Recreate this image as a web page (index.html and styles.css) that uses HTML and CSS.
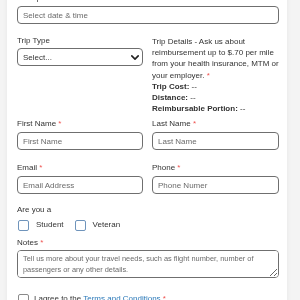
FILE: index.html
```html
<!DOCTYPE html>
<html lang="en">
<head>
  <meta charset="UTF-8">
  <meta name="viewport" content="width=device-width, initial-scale=1">
  <title>Book a Ride</title>
  <link rel="stylesheet" href="styles.css">
</head>
<body>

  <div class="form-card">
    <form id="rideForm" class="ride-form">

      <div class="field">
        <label for="pickup">Pickup Date &amp; Time</label>
        <input type="text" id="pickup" name="pickup" placeholder="Select date &amp; time">
      </div>

      <div class="row trip-row">
        <div class="field">
          <label for="tripType">Trip Type</label>
          <div class="select-wrap">
            <select id="tripType" name="tripType">
              <option>Select...</option>
              <option>One Way</option>
              <option>Round Trip</option>
            </select>
            <svg class="chevron" viewBox="0 0 10 6" width="8" height="5">
              <path d="M1 1l4 4 4-4" fill="none" stroke="#222" stroke-width="2" stroke-linecap="round" stroke-linejoin="round"/>
            </svg>
          </div>
        </div>
        <div class="trip-details">
          <p>Trip Details - Ask us about reimbursement up to $.70 per mile from your health insurance, MTM or your employer. <span class="req">*</span></p>
          <p><strong>Trip Cost:</strong> --</p>
          <p><strong>Distance:</strong> --</p>
          <p><strong>Reimbursable Portion:</strong> --</p>
        </div>
      </div>

      <div class="row name-row">
        <div class="field">
          <label for="firstName">First Name <span class="req">*</span></label>
          <input type="text" id="firstName" name="firstName" placeholder="First Name">
        </div>
        <div class="field">
          <label for="lastName">Last Name <span class="req">*</span></label>
          <input type="text" id="lastName" name="lastName" placeholder="Last Name">
        </div>
      </div>

      <div class="row contact-row">
        <div class="field">
          <label for="email">Email <span class="req">*</span></label>
          <input type="email" id="email" name="email" placeholder="Email Address">
        </div>
        <div class="field">
          <label for="phone">Phone <span class="req">*</span></label>
          <input type="tel" id="phone" name="phone" placeholder="Phone Numer">
        </div>
      </div>

      <div class="status-field">
        <span class="label">Are you a</span>
        <div class="checks">
          <label class="check"><span class="box"></span>Student</label>
          <label class="check"><span class="box"></span>Veteran</label>
        </div>
      </div>

      <div class="notes-field">
        <label for="notes">Notes <span class="req">*</span></label>
        <textarea id="notes" name="notes" placeholder="Tell us more about your travel needs, such as flight number, number of passengers or any other details."></textarea>
      </div>

      <div class="terms">
        <span class="box"></span>
        <span>I agree to the <a href="#">Terms and Conditions</a> <span class="req">*</span></span>
      </div>

    </form>
  </div>

</body>
</html>
```

FILE: styles.css
```css
body {
  margin: 0;
  background: #f4f4f4;
  font-family: "Liberation Sans", Arial, sans-serif;
  font-size: 8px;
  color: #333;
  overflow: hidden;
}

.form-card {
  width: 262px;
  margin: -7px 0 0 7px;
  padding: 0 8px 20px 10px;
  background: #fff;
  box-shadow: 0 0 5px rgba(0, 0, 0, 0.06);
}

.field {
  margin-bottom: 12px;
}

label,
.label {
  display: block;
  line-height: 10px;
  margin-bottom: 2px;
  color: #333;
}

.field > label {
  margin-bottom: 3px;
}

.req {
  color: #ef5350;
}

input[type="text"],
input[type="email"],
input[type="tel"],
select,
textarea {
  display: block;
  width: 100%;
  box-sizing: border-box;
  height: 18px;
  padding: 0 5px;
  border: 1px solid #6f6f6f;
  border-radius: 4px;
  background: #fff;
  font-family: inherit;
  font-size: 8px;
  color: #333;
}

::placeholder {
  color: #6a6a6a;
  opacity: 1;
}

.row {
  display: grid;
  grid-template-columns: 126px 127px;
  column-gap: 9px;
}

.row .field {
  margin-bottom: 0;
}

.trip-row {
  margin-bottom: 5px;
}

.trip-row .field > label {
  margin-bottom: 2px;
}

.name-row {
  margin-bottom: 13px;
}

.contact-row {
  margin-bottom: 11px;
}

.select-wrap {
  position: relative;
}

select {
  appearance: none;
}

.chevron {
  position: absolute;
  right: 4px;
  top: 7px;
  pointer-events: none;
}

.trip-details p {
  margin: 0;
  line-height: 11.2px;
}

.trip-details strong {
  font-weight: bold;
}

.status-field {
  margin-bottom: 7px;
}

.status-field .label {
  margin-bottom: 4px;
}

.checks {
  display: flex;
  gap: 10px;
}

.check {
  display: flex;
  align-items: center;
  gap: 7px;
  margin: 0;
  padding-left: 1px;
  line-height: 12px;
}

.box {
  display: inline-block;
  width: 9px;
  height: 9px;
  border: 1px solid #6f94bb;
  border-radius: 2px;
  background: #fff;
}

.notes-field > label {
  margin-bottom: 2px;
}

textarea {
  height: 28px;
  padding: 3px 5px;
  font-size: 7.4px;
  line-height: 10.5px;
  resize: vertical;
}

.terms {
  display: flex;
  align-items: center;
  gap: 5px;
  margin-top: 15px;
  line-height: 12px;
  padding-left: 1px;
}

.terms .box {
  border-color: #8a8a8a;
}

.terms a {
  color: #2a78b8;
  text-decoration: none;
}
```
